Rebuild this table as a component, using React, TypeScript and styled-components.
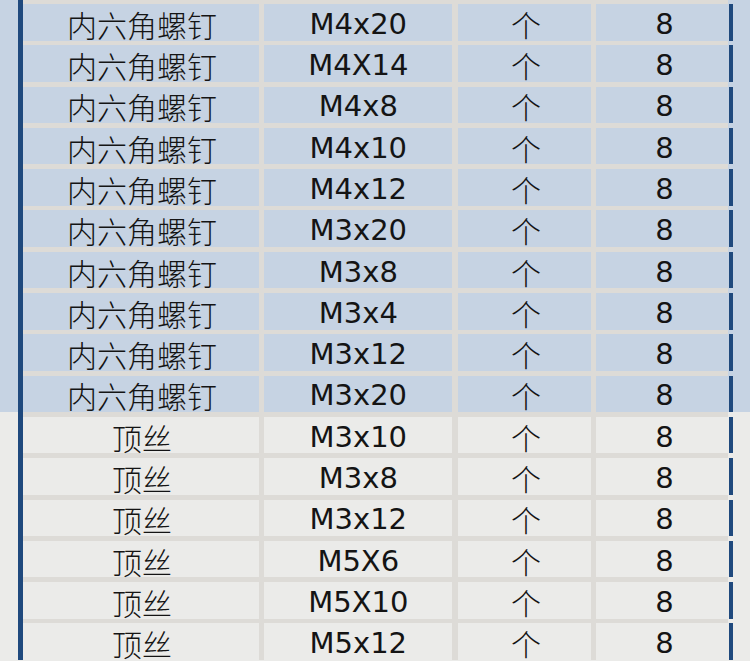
import React from 'react'
import styled, { createGlobalStyle } from 'styled-components'

type Part = { name: string; spec: string; unit: string; qty: number }

const screws: Part[] = [
  { name: '内六角螺钉', spec: 'M4x20', unit: '个', qty: 8 },
  { name: '内六角螺钉', spec: 'M4X14', unit: '个', qty: 8 },
  { name: '内六角螺钉', spec: 'M4x8', unit: '个', qty: 8 },
  { name: '内六角螺钉', spec: 'M4x10', unit: '个', qty: 8 },
  { name: '内六角螺钉', spec: 'M4x12', unit: '个', qty: 8 },
  { name: '内六角螺钉', spec: 'M3x20', unit: '个', qty: 8 },
  { name: '内六角螺钉', spec: 'M3x8', unit: '个', qty: 8 },
  { name: '内六角螺钉', spec: 'M3x4', unit: '个', qty: 8 },
  { name: '内六角螺钉', spec: 'M3x12', unit: '个', qty: 8 },
  { name: '内六角螺钉', spec: 'M3x20', unit: '个', qty: 8 },
]

const setScrews: Part[] = [
  { name: '顶丝', spec: 'M3x10', unit: '个', qty: 8 },
  { name: '顶丝', spec: 'M3x8', unit: '个', qty: 8 },
  { name: '顶丝', spec: 'M3x12', unit: '个', qty: 8 },
  { name: '顶丝', spec: 'M5X6', unit: '个', qty: 8 },
  { name: '顶丝', spec: 'M5X10', unit: '个', qty: 8 },
  { name: '顶丝', spec: 'M5x12', unit: '个', qty: 8 },
]

const tints = {
  blue: '#c6d3e3',
  gray: '#ebebe9',
}

export default function App() {
  const renderRows = (rows: Part[], tint: keyof typeof tints) =>
    rows.map((p, i) => (
      <Band key={tint + i} $tint={tints[tint]}>
        <Row>
          <Cell $tint={tints[tint]} $cjk $shift={2}>
            {p.name}
          </Cell>
          <Cell $tint={tints[tint]}>{p.spec}</Cell>
          <Cell $tint={tints[tint]} $cjk $shift={4}>
            {p.unit}
          </Cell>
          <Cell $tint={tints[tint]} $last $shift={4}>
            {p.qty}
          </Cell>
        </Row>
      </Band>
    ))

  return (
    <>
      <GlobalStyle />
      <Page>
        {renderRows(screws, 'blue')}
        {renderRows(setScrews, 'gray')}
      </Page>
    </>
  )
}

const GlobalStyle = createGlobalStyle`
  html, body {
    margin: 0;
    padding: 0;
    background: #ebebe9;
  }
  body {
    width: 750px;
    height: 661px;
    overflow: hidden;
  }
`

const Page = styled.main`
  width: 750px;
  margin-top: -0.8px;
`

const Band = styled.div<{ $tint: string }>`
  background: ${(p) => p.$tint};
  padding-left: 18px;
`

const Row = styled.div`
  width: 710px;
  height: 41.3px;
  box-sizing: border-box;
  padding-top: 4.8px;
  border-left: 5px solid #1f497d;
  background: #dddbd7;
  display: grid;
  grid-template-columns: 236px 188px 133px 137px;
  grid-template-rows: 36.5px;
  column-gap: 5.3px;
`

const Cell = styled.div<{
  $tint: string
  $cjk?: boolean
  $last?: boolean
  $shift?: number
}>`
  background: ${(p) => p.$tint};
  display: flex;
  align-items: center;
  justify-content: center;
  box-sizing: border-box;
  height: 36.5px;
  padding-top: ${(p) => (p.$cjk ? '3px' : '4px')};
  padding-left: ${(p) => p.$shift ?? 0}px;
  line-height: 1;
  color: #141414;
  font-size: ${(p) => (p.$cjk ? '30px' : '29px')};
  font-family: ${(p) =>
    p.$cjk
      ? '"Noto Sans CJK SC", sans-serif'
      : '"DejaVu Sans", "Noto Sans CJK SC", sans-serif'};
  font-weight: ${(p) => (p.$cjk ? 300 : 400)};
  border-right: ${(p) => (p.$last ? '4px solid #1f497d' : 'none')};
  white-space: nowrap;
`
